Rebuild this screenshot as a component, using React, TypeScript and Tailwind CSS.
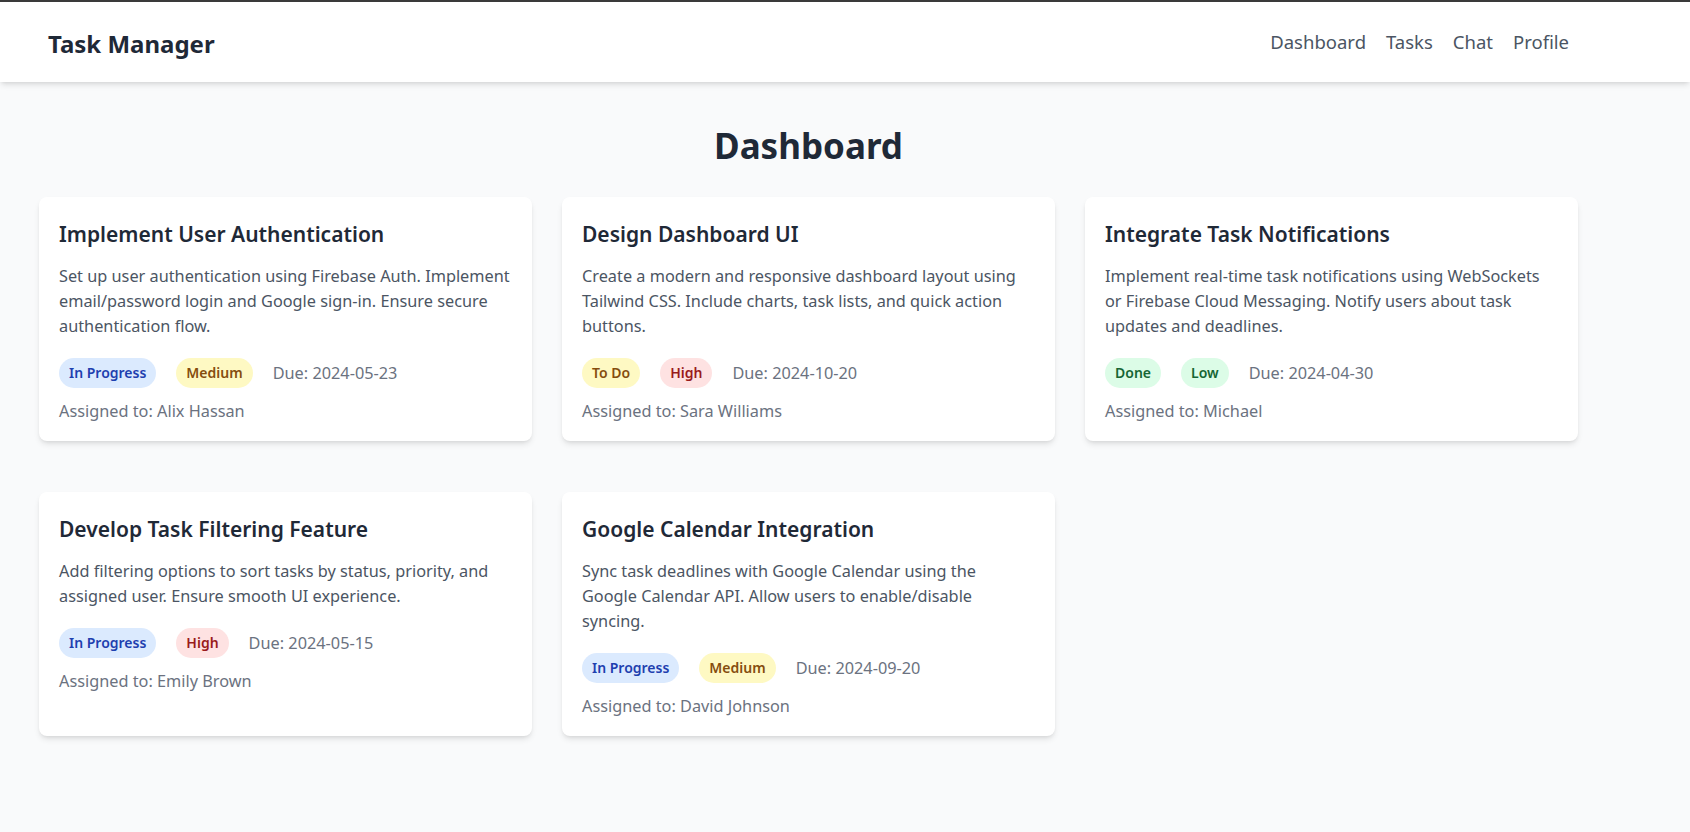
type Task = {
  title: string;
  lines: string[];
  status: "In Progress" | "To Do" | "Done";
  priority: "High" | "Medium" | "Low";
  due: string;
  assignee: string;
};

const tasks: Task[] = [
  {
    title: "Implement User Authentication",
    lines: [
      "Set up user authentication using Firebase Auth. Implement",
      "email/password login and Google sign-in. Ensure secure",
      "authentication flow.",
    ],
    status: "In Progress",
    priority: "Medium",
    due: "2024-05-23",
    assignee: "Alix Hassan",
  },
  {
    title: "Design Dashboard UI",
    lines: [
      "Create a modern and responsive dashboard layout using",
      "Tailwind CSS. Include charts, task lists, and quick action",
      "buttons.",
    ],
    status: "To Do",
    priority: "High",
    due: "2024-10-20",
    assignee: "Sara Williams",
  },
  {
    title: "Integrate Task Notifications",
    lines: [
      "Implement real-time task notifications using WebSockets",
      "or Firebase Cloud Messaging. Notify users about task",
      "updates and deadlines.",
    ],
    status: "Done",
    priority: "Low",
    due: "2024-04-30",
    assignee: "Michael",
  },
  {
    title: "Develop Task Filtering Feature",
    lines: [
      "Add filtering options to sort tasks by status, priority, and",
      "assigned user. Ensure smooth UI experience.",
    ],
    status: "In Progress",
    priority: "High",
    due: "2024-05-15",
    assignee: "Emily Brown",
  },
  {
    title: "Google Calendar Integration",
    lines: [
      "Sync task deadlines with Google Calendar using the",
      "Google Calendar API. Allow users to enable/disable",
      "syncing.",
    ],
    status: "In Progress",
    priority: "Medium",
    due: "2024-09-20",
    assignee: "David Johnson",
  },
];

const statusClass: Record<Task["status"], string> = {
  "In Progress": "bg-[#dbeafe] text-[#1e40af]",
  "To Do": "bg-[#fef9c3] text-[#854d0e]",
  Done: "bg-[#dcfce7] text-[#166534]",
};

const priorityClass: Record<Task["priority"], string> = {
  High: "bg-[#fee2e2] text-[#991b1b]",
  Medium: "bg-[#fef9c3] text-[#854d0e]",
  Low: "bg-[#dcfce7] text-[#166534]",
};

function Badge({ label, cls }: { label: string; cls: string }) {
  return (
    <span className={`inline-flex h-[30px] items-center rounded-full px-[10px] text-[14px] font-semibold leading-5 ${cls}`}>
      {label}
    </span>
  );
}

function TaskCard({ t }: { t: Task }) {
  return (
    <div className="flex flex-col rounded-lg bg-white px-5 pt-[23px] pb-[18px] shadow-md">
      <h2 className="text-[21px] font-semibold leading-7 text-[#1f2937]">{t.title}</h2>
      <p className="mt-4 text-[16.3px] leading-[25px] text-[#4b5563]">
        {t.lines.map((l, i) => (
          <span key={i} className="block whitespace-nowrap">
            {l}
          </span>
        ))}
      </p>
      <div className="mt-[19px] flex items-center gap-5">
        <Badge label={t.status} cls={statusClass[t.status]} />
        <Badge label={t.priority} cls={priorityClass[t.priority]} />
        <span className="text-[16.3px] leading-6 text-[#6b7280]">Due: {t.due}</span>
      </div>
      <p className="mt-[11px] text-[16.3px] leading-6 text-[#6b7280]">Assigned to: {t.assignee}</p>
    </div>
  );
}

export default function App() {
  return (
    <div
      className="min-h-screen bg-[#f9fafb]"
      style={{ fontFamily: '"Noto Sans", "Open Sans", sans-serif' }}
    >
      <header className="relative z-10 flex h-[82px] items-start justify-between border-t-2 border-[#3a3a3a] bg-white pt-[26px] pl-12 pr-[121px] shadow-md">
        <h1 className="text-2xl font-bold leading-8 text-[#1f2937]">Task Manager</h1>
        <nav className="flex gap-5 text-[18.5px] leading-7 text-[#4b5563]">
          <a>Dashboard</a>
          <a>Tasks</a>
          <a>Chat</a>
          <a>Profile</a>
        </nav>
      </header>
      <main className="pt-[44px] pl-[39px] pr-[112px] pb-12">
        <h1 className="text-center text-[35px] font-bold leading-10 text-[#1f2937]">Dashboard</h1>
        <div className="mt-[31px] grid grid-cols-3 gap-x-[30px] gap-y-[51px]">
          {tasks.map((t) => (
            <TaskCard key={t.title} t={t} />
          ))}
        </div>
      </main>
    </div>
  );
}
